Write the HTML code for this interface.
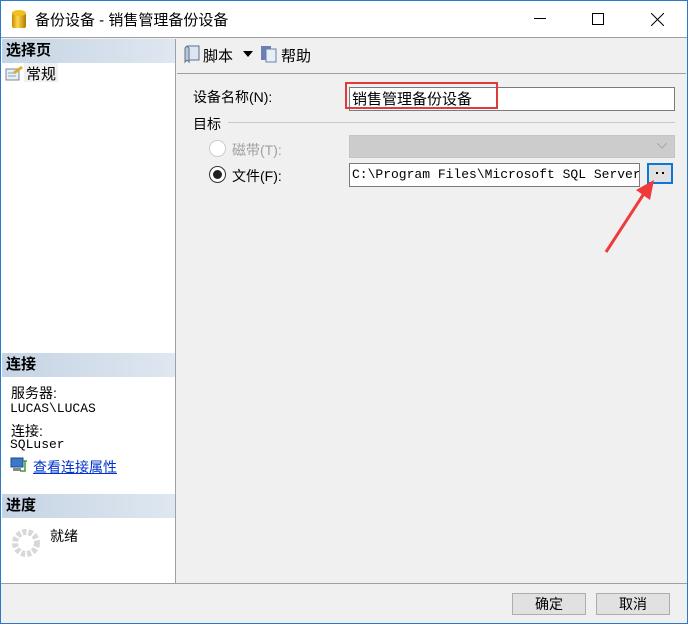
<!DOCTYPE html>
<html><head><meta charset="utf-8"><style>
*{margin:0;padding:0;box-sizing:border-box}
body{width:688px;height:624px;position:relative;background:#f0f0f0;font-family:"Liberation Sans","Noto Sans CJK SC",sans-serif;font-size:14px;color:#000;overflow:hidden}
.a{position:absolute}
.hdr{position:absolute;left:2px;width:173px;height:24px;background:linear-gradient(90deg,#c5d4e4,#dfe7f0);font-weight:bold;font-size:15px;line-height:24px;padding-left:4px}
.mono{font-family:"Liberation Mono","Noto Sans CJK SC",monospace}
.btn{position:absolute;width:74px;height:22px;background:#e1e1e1;border:1px solid #adadad;text-align:center;line-height:20px;font-size:14px}
</style></head><body>
<div class="a" style="left:0;top:0;width:688px;height:624px;border:1px solid #2b79c9"></div>
<div class="a" style="left:1px;top:1px;width:686px;height:37px;background:#fff;border-bottom:1px solid #a0a0a0"></div>
<svg class="a" style="left:11px;top:9px" width="16" height="22"><defs><linearGradient id="g" x1="0" x2="1"><stop offset="0" stop-color="#c88a00"/><stop offset=".4" stop-color="#ffd84a"/><stop offset="1" stop-color="#b07800"/></linearGradient></defs><rect x="1" y="3" width="14" height="16" rx="2" fill="url(#g)"/><ellipse cx="8" cy="4" rx="7" ry="3" fill="#f0c020"/></svg>
<div class="a" style="left:35px;top:9px;font-size:15px">备份设备 - 销售管理备份设备</div>
<div class="a" style="left:534px;top:18px;width:12px;height:1px;background:#000"></div>
<div class="a" style="left:592px;top:13px;width:12px;height:12px;border:1px solid #000"></div>
<svg class="a" style="left:651px;top:13px" width="13" height="13"><path d="M0 0L13 13M13 0L0 13" stroke="#000" stroke-width="1"/></svg>

<div class="a" style="left:1px;top:39px;width:175px;height:544px;background:#fff;border-right:1px solid #a0a0a0"></div>
<div class="hdr" style="top:39px">选择页</div>
<svg class="a" style="left:5px;top:65px" width="18" height="16"><rect x="1" y="4" width="13" height="11" fill="#e8eef6" stroke="#7a8aa0"/><path d="M3 8h8M3 11h8" stroke="#8aa"/><path d="M8 7L16 1l2 2-8 6z" fill="#d8b020"/></svg>
<div class="a" style="left:24px;top:63px;width:34px;height:19px;background:#f0f0f0;padding-left:2px;font-size:15px">常规</div>
<div class="hdr" style="top:353px">连接</div>
<div class="a" style="left:11px;top:385px;line-height:16px">服务器:</div>
<div class="a mono" style="left:10px;top:401px;font-size:13px">LUCAS\LUCAS</div>
<div class="a" style="left:11px;top:421px">连接:</div>
<div class="a mono" style="left:10px;top:437px;font-size:13px">SQLuser</div>
<svg class="a" style="left:10px;top:457px" width="18" height="17"><rect x="1" y="1" width="12" height="9" fill="#3a78c8" stroke="#1c4a8a"/><rect x="3" y="11" width="8" height="3" fill="#888"/><path d="M13 4h4M15 4v10h-5" stroke="#3a9a3a" stroke-width="1.5" fill="none"/></svg>
<div class="a" style="left:33px;top:457px;color:#0033cc;text-decoration:underline">查看连接属性</div>
<div class="hdr" style="top:494px">进度</div>
<svg class="a" style="left:11px;top:528px" width="30" height="30"><circle cx="15" cy="15" r="11" fill="none" stroke="#d8d8d8" stroke-width="6" stroke-dasharray="4 2"/></svg>
<div class="a" style="left:50px;top:526px">就绪</div>

<div class="a" style="left:177px;top:73px;width:509px;height:1px;background:#a0a0a0"></div>
<svg class="a" style="left:183px;top:44px" width="18" height="20"><path d="M4 2h12v14H4z" fill="#dde6f0" stroke="#5a7090"/><path d="M2 4q2-3 4 0v14q-2-3-4 0z" fill="#b8c8d8" stroke="#5a7090"/></svg>
<div class="a" style="left:203px;top:45px;font-size:15px">脚本</div>
<svg class="a" style="left:243px;top:51px" width="10" height="6"><path d="M0 0h10L5 6z" fill="#000"/></svg>
<svg class="a" style="left:260px;top:45px" width="18" height="18"><rect x="1" y="1" width="10" height="14" fill="#6a80b0"/><rect x="6" y="4" width="10" height="13" fill="#e8eef6" stroke="#6a80b0"/></svg>
<div class="a" style="left:281px;top:45px;font-size:15px">帮助</div>

<div class="a" style="left:193px;top:87px">设备名称(N):</div>
<div class="a" style="left:349px;top:87px;width:326px;height:24px;background:#fff;border:1px solid #7a7a7a"></div>
<div class="a" style="left:345px;top:82px;width:153px;height:27px;border:2px solid #e03a3a"></div>
<div class="a" style="left:352px;top:88px;font-size:15px">销售管理备份设备</div>
<div class="a" style="left:193px;top:114px">目标</div>
<div class="a" style="left:228px;top:122px;width:447px;height:1px;background:#c8c8c8"></div>
<div class="a" style="left:209px;top:140px;width:17px;height:17px;border-radius:50%;border:1px solid #ccc;background:#fff"></div>
<div class="a" style="left:232px;top:140px;color:#a0a0a0">磁带(T):</div>
<div class="a" style="left:349px;top:135px;width:326px;height:23px;background:#cccccc;border:1px solid #c4c4c4"></div>
<svg class="a" style="left:657px;top:143px" width="10" height="6"><path d="M0 0l5 5 5-5" stroke="#aaa" fill="none"/></svg>
<div class="a" style="left:209px;top:166px;width:17px;height:17px;border-radius:50%;border:1px solid #333;background:#fff"></div>
<div class="a" style="left:213px;top:170px;width:9px;height:9px;border-radius:50%;background:#222"></div>
<div class="a" style="left:232px;top:166px">文件(F):</div>
<div class="a" style="left:349px;top:163px;width:291px;height:24px;background:#fff;border:1px solid #7a7a7a;overflow:hidden"><div class="mono" style="padding:3px 0 0 2px;font-size:13px;white-space:nowrap">C:\Program Files\Microsoft SQL Server</div></div>
<div class="a" style="left:647px;top:163px;width:26px;height:21px;background:#e1e1e1;border:2px solid #0a78d7"><div class="a" style="left:7px;top:7px;width:2px;height:2px;background:#000"></div><div class="a" style="left:13px;top:7px;width:2px;height:2px;background:#000"></div></div>
<svg class="a" style="left:600px;top:175px" width="60" height="80"><path d="M6 77L45 17" stroke="#ef3b3b" stroke-width="3"/><path d="M54 5L36 15l14 10z" fill="#ef3b3b"/></svg>

<div class="a" style="left:1px;top:583px;width:686px;height:1px;background:#a0a0a0"></div>
<div class="btn" style="left:512px;top:593px">确定</div>
<div class="btn" style="left:596px;top:593px">取消</div>
</body></html>
